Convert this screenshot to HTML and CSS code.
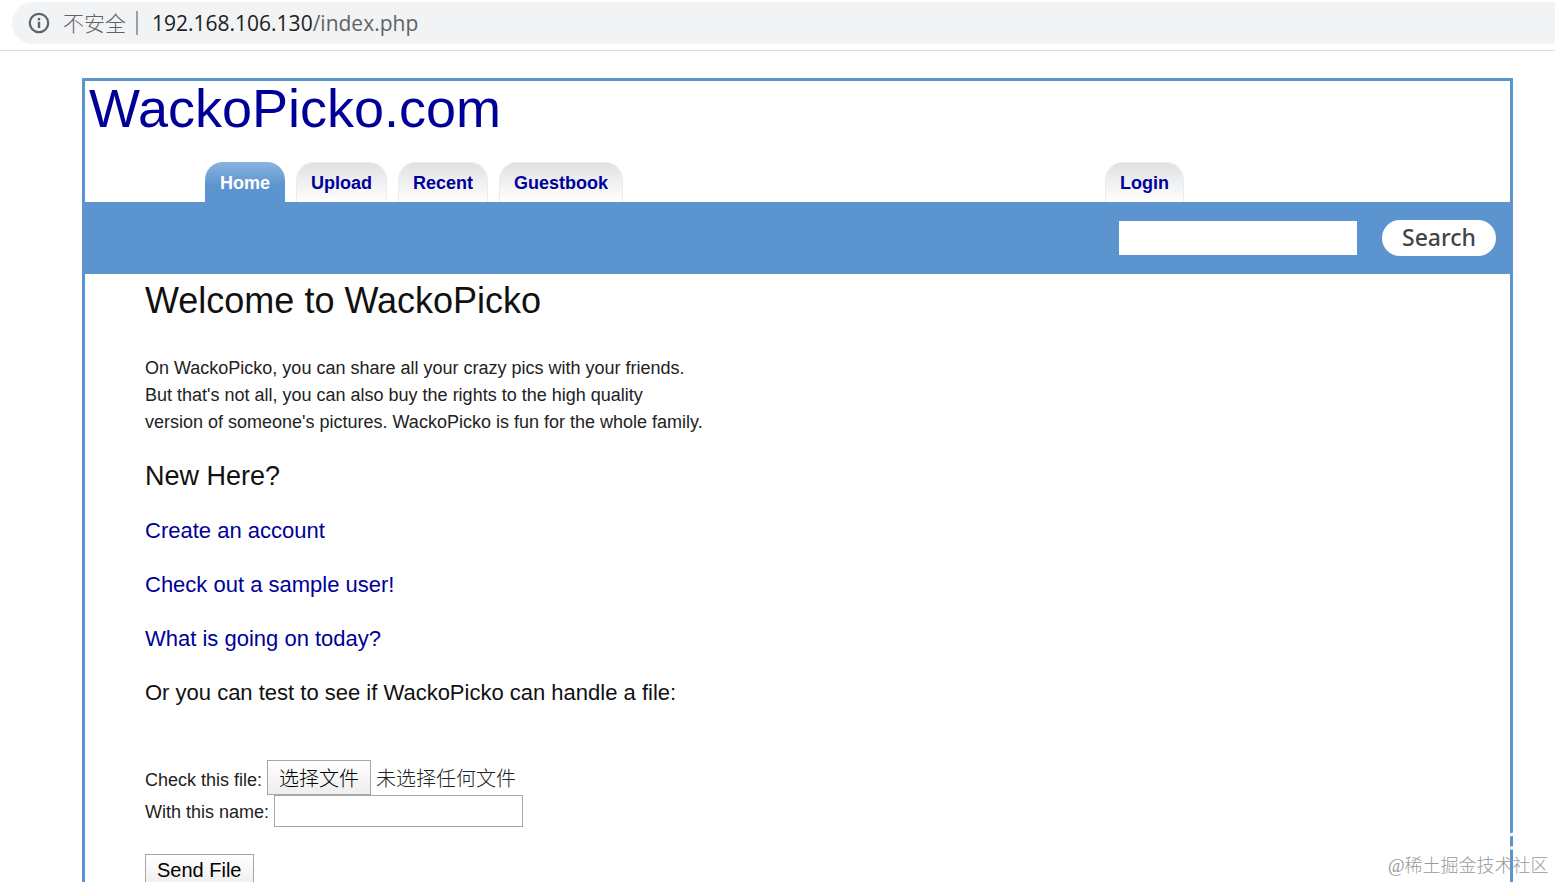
FILE: index.html
```
<!DOCTYPE html>
<html lang="zh-CN">
<head>
  <meta charset="UTF-8">
  <title>WackoPicko.com</title>
  <link rel="stylesheet" href="styles.css">
</head>
<body>

  <div class="browser-bar">
    <div class="address">
      <svg class="info-icon" viewBox="0 0 22 22" aria-hidden="true">
        <circle cx="11" cy="11" r="9.2" fill="none" stroke="#5f6368" stroke-width="2.2"/>
        <rect x="9.8" y="9.8" width="2.4" height="6.2" fill="#5f6368"/>
        <rect x="9.8" y="6" width="2.4" height="2.4" fill="#5f6368"/>
      </svg>
      <span class="insecure">不安全</span>
      <span class="url"><b>192.168.106.130</b>/index.php</span>
    </div>
  </div>

  <div class="site">
    <header>
      <h1><a href="#">WackoPicko.com</a></h1>
      <nav class="tabs">
        <a class="tab current" href="#">Home</a>
        <a class="tab" href="#">Upload</a>
        <a class="tab" href="#">Recent</a>
        <a class="tab" href="#">Guestbook</a>
        <a class="tab login" href="#">Login</a>
      </nav>
    </header>

    <form class="search-bar">
      <input type="text" name="query" aria-label="Search">
      <button type="button">Search</button>
    </form>

    <main class="content">
      <h2>Welcome to WackoPicko</h2>
      <p>
        On WackoPicko, you can share all your crazy pics with your friends.<br>
        But that's not all, you can also buy the rights to the high quality<br>
        version of someone's pictures. WackoPicko is fun for the whole family.
      </p>
      <h3>New Here?</h3>
      <h4><a href="#">Create an account</a></h4>
      <h4><a href="#">Check out a sample user!</a></h4>
      <h4><a href="#">What is going on today?</a></h4>
      <h4>Or you can test to see if WackoPicko can handle a file:</h4>

      <form class="file-form">
        <div class="row">
          <span>Check this file:</span>
          <input class="file-input" type="file" id="userfile">
          <label class="file-button" for="userfile">选择文件</label>
          <span class="file-name">未选择任何文件</span>
        </div>
        <div class="row">
          <label for="name">With this name:</label>
          <input class="name-input" type="text" id="name">
        </div>
        <button class="send" type="button">Send File</button>
      </form>
    </main>
  </div>

  <div class="watermark">
    <svg class="watermark-logo" viewBox="0 0 160 30" aria-hidden="true">
      <path d="M117 13 L130 10 M117 25 H130" stroke="#fff" stroke-width="3"/>
    </svg>
    <span>@稀土掘金技术社区</span>
  </div>

</body>
</html>
```

FILE: styles.css
```
* {
  margin: 0;
  padding: 0;
  box-sizing: border-box;
}
body {
  position: relative;
  height: 100vh;
  overflow: hidden;
  font-family: "Liberation Sans", "Noto Sans CJK SC", Arial, sans-serif;
  font-size: 18px;
  line-height: 27px;
  color: #222;
  background-color: #fff;
}
a {
  color: #009;
  text-decoration: none;
}

/* address bar */
.browser-bar {
  padding: 2px 0 6px 12px;
  border-bottom: 1px solid #dadce0;
}
.address {
  display: flex;
  align-items: center;
  height: 42px;
  padding-left: 16px;
  background-color: #f1f3f4;
  border-radius: 21px 0 0 21px;
  font-family: "Open Sans", "Noto Sans CJK SC", sans-serif;
  font-size: 21px;
  color: #5f6368;
}
.info-icon {
  width: 22px;
  height: 22px;
}
.insecure {
  height: 24px;
  margin-left: 13px;
  padding-right: 10px;
  border-right: 2px solid #9aa0a6;
  font-family: "Noto Sans CJK SC", sans-serif;
  font-weight: 300;
  line-height: 22px;
}
.url {
  margin-left: 14px;
}
.url b {
  font-weight: normal;
  color: #202124;
}

/* header and tabs */
.site {
  margin: 27px 42px 0 82px;
  border: 3px solid #5c94d0;
}
h1, h2, h3, h4 {
  font-weight: normal;
  color: #111;
}
h1 {
  padding-left: 4px;
  font-size: 54px;
  line-height: 54px;
}
.tabs {
  display: flex;
  gap: 11px;
  margin-top: 27px;
  padding: 0 326px 0 120px;
}
.tab {
  height: 40px;
  padding: 0 14px;
  border: 1px solid #ececee;
  border-bottom: none;
  border-radius: 18px 18px 0 0;
  background: linear-gradient(#e0e1e3, #fff);
  font-weight: bold;
  line-height: 40px;
}
.tab.current {
  border-color: transparent;
  background: linear-gradient(#8ab3df, #5c94d0 60%) border-box;
  color: #fff;
}
.tab.login {
  margin-left: auto;
}

.search-bar {
  display: flex;
  justify-content: flex-end;
  align-items: center;
  gap: 25px;
  height: 72px;
  padding-right: 14px;
  background-color: #5c94d0;
}
.search-bar input {
  width: 238px;
  height: 34px;
  padding: 0 4px;
  border: none;
  background-color: #fff;
  font-size: 20px;
}
.search-bar button {
  width: 114px;
  height: 36px;
  padding-bottom: 2px;
  border: none;
  border-radius: 18px;
  background-color: #fff;
  font-family: "Noto Sans", sans-serif;
  font-size: 23px;
  font-weight: 500;
  line-height: 34px;
  color: #444;
  cursor: pointer;
}

/* page text */
.content {
  padding: 0 60px 27px;
}
h2 {
  font-size: 36px;
  line-height: 54px;
}
p, h3, h4 {
  margin-top: 27px;
}
h3 {
  font-size: 27px;
}
h4 {
  font-size: 22px;
}

/* upload form */
.file-form {
  margin-top: 54px;
}
.row {
  display: flex;
  align-items: baseline;
  gap: 5px;
}
.file-input {
  position: absolute;
  width: 1px;
  height: 1px;
  opacity: 0;
}
.file-button, .send {
  border: 1px solid #a6a6a6;
  background: linear-gradient(#fff, #eee);
  font-size: 20px;
  color: #000;
  cursor: pointer;
}
.file-button {
  height: 35px;
  padding: 0 11px;
  line-height: 33px;
}
.file-button, .file-name {
  font-family: "Noto Sans CJK SC", sans-serif;
  font-weight: 300;
}
.file-name {
  font-size: 20px;
}
.name-input {
  width: 249px;
  height: 32px;
  padding: 0 4px;
  border: 1px solid #a6a6a6;
  font-size: 20px;
}
.send {
  height: 32px;
  margin-top: 27px;
  padding: 0 11px;
  font-family: inherit;
}

.watermark {
  position: absolute;
  right: 7px;
  bottom: 2px;
  width: 160px;
  font-family: "Liberation Serif", "Noto Sans CJK SC", serif;
  font-weight: 300;
  font-size: 18px;
  color: #999;
  text-align: right;
  white-space: nowrap;
}
.watermark-logo {
  display: block;
  width: 160px;
  height: 30px;
}
```
